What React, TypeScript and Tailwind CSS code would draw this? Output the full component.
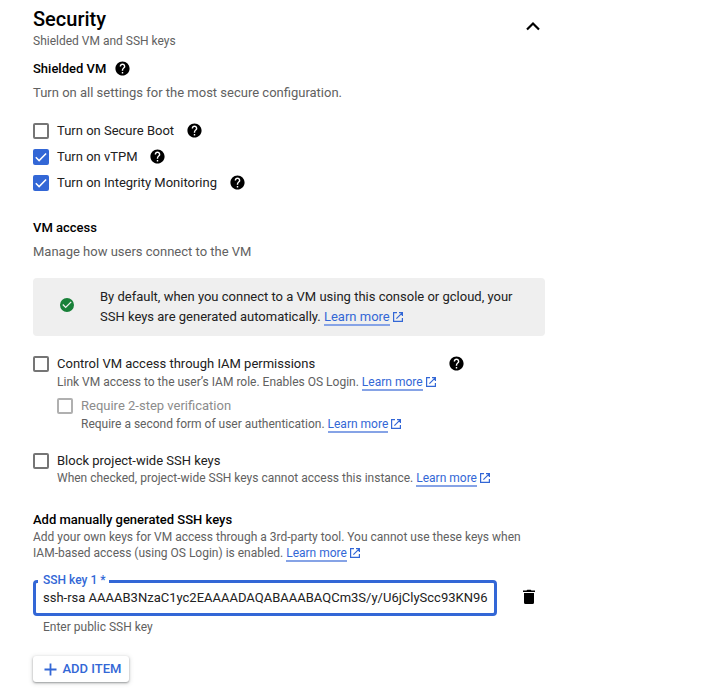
import type { ReactNode } from "react";

function HelpIcon() {
  return (
    <svg className="block size-[17px] shrink-0" viewBox="0 0 24 24" fill="#000">
      <path d="M12 2C6.48 2 2 6.48 2 12s4.48 10 10 10 10-4.48 10-10S17.52 2 12 2zm1 17h-2v-2h2v2zm2.07-7.75l-.9.92C13.45 12.9 13 13.5 13 15h-2v-.5c0-1.1.45-2.1 1.17-2.83l1.24-1.26c.37-.36.59-.86.59-1.41 0-1.1-.9-2-2-2s-2 .9-2 2H8c0-2.21 1.79-4 4-4s4 1.79 4 4c0 .88-.36 1.68-.93 2.25z" />
    </svg>
  );
}

function LearnMore() {
  return (
    <a className="flex h-[18px] items-center text-[#3367d6]">
      <span className="h-[18px] border-b-2 border-[#86a3e6] leading-[18px]">Learn more</span>
      <svg className="ml-[2px] block size-[12px]" viewBox="0 0 12 12" fill="none" stroke="#3367d6" strokeWidth="1.2">
        <path d="M5 1.600H1.600v8.800h8.800V7M7 1.600h3.400V5M10.200 1.800L4.400 7.600" />
      </svg>
    </a>
  );
}

function Checkbox({ checked = false, disabled = false }: { checked?: boolean; disabled?: boolean }) {
  if (checked) {
    return (
      <span className="block size-[16px] shrink-0 rounded-[2px] bg-[#3367d6]">
        <svg className="block size-[16px]" viewBox="0 0 16 16" fill="none" stroke="#fff" strokeWidth="1.5">
          <path d="M2.800 8.300l3.300 3.300 7-7.200" />
        </svg>
      </span>
    );
  }
  return (
    <span
      className={`block size-[16px] shrink-0 rounded-[2px] border-2 ${disabled ? "border-[#b0b0b0]" : "border-[#757575]"}`}
    />
  );
}

function CheckRow({ label, checked }: { label: string; checked?: boolean }) {
  return (
    <div className="flex h-[26px] items-center">
      <Checkbox checked={checked} />
      <span className="ml-2">{label}</span>
      <span className="-mt-px ml-[11.5px]">
        <HelpIcon />
      </span>
    </div>
  );
}

function Hint({ children, className = "h-[18px]" }: { children: ReactNode; className?: string }) {
  return <p className={`flex items-center text-[12px] text-[#616161] ${className}`}>{children}</p>;
}

export default function App() {
  return (
    <main className="h-[698px] w-[710px] overflow-hidden bg-white pl-[33px] font-['Roboto',sans-serif] text-[13px] leading-[20px] whitespace-pre text-[#212121]">
      <header className="flex h-[58px] w-[512px] justify-between pt-[7px]">
        <div>
          <h1 className="text-[20px] leading-[24px] font-medium text-black">Security</h1>
          <Hint className="mt-[1px] h-[18px]">Shielded VM and SSH keys</Hint>
        </div>
        <svg className="mt-[8px] block size-[24px]" viewBox="0 0 24 24" fill="none" stroke="#000" strokeWidth="2.200">
          <path d="M6 14.500l6-6 6 6" />
        </svg>
      </header>

      <section>
        <h2 className="flex h-[20px] items-center pt-[2px] font-medium text-black">
          Shielded VM
          <span className="-mt-[2px] ml-[7.5px]">
            <HelpIcon />
          </span>
        </h2>
        <p className="mt-[5px] text-[#616161]">Turn on all settings for the most secure configuration.</p>
        <div className="mt-[15px]">
          <CheckRow label="Turn on Secure Boot" />
          <CheckRow label="Turn on vTPM" checked />
          <CheckRow label="Turn on Integrity Monitoring" checked />
        </div>
      </section>

      <section className="mt-[22px]">
        <h2 className="font-medium text-black">VM access</h2>
        <p className="mt-[4px] text-[#616161]">Manage how users connect to the VM</p>
        <div className="mt-[16px] flex h-[58px] w-[512px] items-center rounded-[4px] bg-[#efefef] pl-[26px]">
          <svg className="mt-[-5px] block size-[16px]" viewBox="0 0 24 24" fill="#188038">
            <path d="M12 1.500a10.500 10.500 0 100 21 10.500 10.500 0 000-21zM10 17l-5-5 1.410-1.410L10 14.170l7.590-7.590L19 8l-9 9z" />
          </svg>
          <div className="ml-[25px]">
            <p>By default, when you connect to a VM using this console or gcloud, your</p>
            <p className="flex items-center">
              {"SSH keys are generated automatically. "}
              <LearnMore />
            </p>
          </div>
        </div>
      </section>

      <section className="mt-[18px]">
        <div className="flex h-[20px] w-[431.5px] items-center">
          <Checkbox />
          <span className="ml-2">Control VM access through IAM permissions</span>
          <span className="-mt-px ml-auto">
            <HelpIcon />
          </span>
        </div>
        <div className="-mt-px pl-6">
          <Hint>
            {"Link VM access to the user’s IAM role. Enables OS Login. "}
            <LearnMore />
          </Hint>
          <div className="mt-[5px] flex h-[20px] items-center text-[#8c8c8c]">
            <Checkbox disabled />
            <span className="ml-2">Require 2-step verification</span>
          </div>
          <Hint className="-mt-px h-[18px] pl-6">
            {"Require a second form of user authentication. "}
            <LearnMore />
          </Hint>
        </div>
        <div className="mt-[18px] flex h-[20px] items-center">
          <Checkbox />
          <span className="ml-2">Block project-wide SSH keys</span>
        </div>
        <Hint className="-mt-[2px] h-[18px] pl-6">
          {"When checked, project-wide SSH keys cannot access this instance. "}
          <LearnMore />
        </Hint>
      </section>

      <section className="mt-[23px]">
        <h2 className="font-medium text-black">Add manually generated SSH keys</h2>
        <Hint className="-mt-px h-[16px]">Add your own keys for VM access through a 3rd-party tool. You cannot use these keys when</Hint>
        <Hint className="h-[16px]">
          {"IAM-based access (using OS Login) is enabled. "}
          <LearnMore />
        </Hint>

        <div className="mt-[19px] flex items-center">
          <div className="relative flex h-[36px] w-[464px] items-center rounded-[4px] border-[3px] border-[#3367d6] pl-[7px]">
            <span className="absolute top-[-11px] left-[2px] bg-white pr-[3px] pl-[5px] text-[12px] leading-[16px] font-medium text-[#3367d6]">
              SSH key 1 *
            </span>
            <span>ssh-rsa AAAAB3NzaC1yc2EAAAADAQABAAABAQCm3S/y/U6jClyScc93KN96</span>
          </div>
          <svg className="-mt-[2px] ml-[23px] block size-[18px]" viewBox="0 0 18 18" fill="#000">
            <path d="M4 5h10v9.500a1.500 1.500 0 01-1.500 1.500h-7A1.500 1.500 0 014 14.500zM3 2.500h3.500L7.300 1.700h3.400l.8.8H15V4H3z" />
          </svg>
        </div>
        <Hint className="mt-[2px] h-[18px] pl-[10px]">Enter public SSH key</Hint>
        <button className="mt-[20px] flex h-[26px] w-[96px] items-center rounded-[3px] bg-white pl-[10.500px] font-medium text-[#3367d6] shadow-[0_1px_2px_rgba(60,64,67,0.45),0_1px_4px_1px_rgba(60,64,67,0.15)]">
          <svg className="mr-[6px] block size-[13px]" viewBox="0 0 13 13" stroke="#3367d6" strokeWidth="1.800">
            <path d="M6.500 .5v12M.5 6.500h12" />
          </svg>
          ADD ITEM
        </button>
      </section>
    </main>
  );
}
